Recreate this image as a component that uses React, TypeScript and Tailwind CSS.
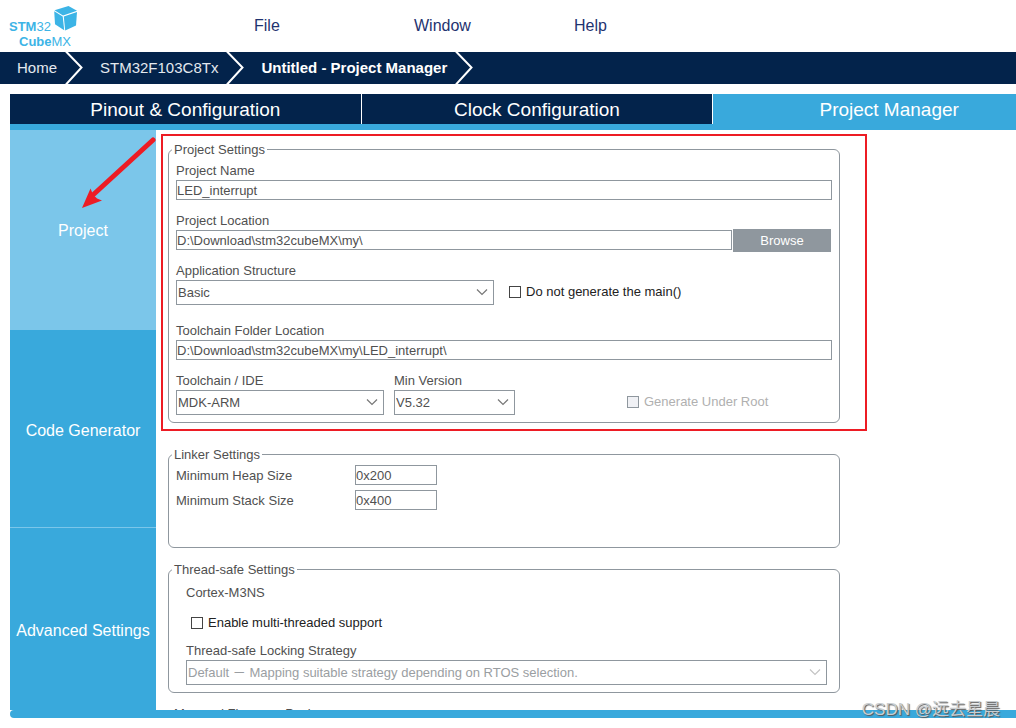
import { useState } from "react";
import type { ReactNode } from "react";

const MENU_ITEMS = ["File", "Window", "Help"];
const TABS = ["Pinout & Configuration", "Clock Configuration", "Project Manager"];

const inputStyle =
  "h-5 min-w-0 border border-[#8f979e] bg-white p-0 text-[13px] leading-4 text-[#505050] outline-none";

function Logo() {
  return (
    <svg
      width="80"
      height="52"
      viewBox="0 0 80 52"
      role="img"
      aria-label="STM32 CubeMX"
      className="font-['Liberation_Sans',sans-serif]"
      fill="#3cb4e6"
    >
      <path d="M54.5 10.3 68.5 6 77 10.8 63 15.6Z" />
      <path d="M54.2 11.3 62.7 16.4 64.2 30.2 55 24.2Z" />
      <path d="M63.8 16.4 77 11.9 76 25.6 65.2 30.4Z" />
      <text x="9" y="31" fontSize="13">
        <tspan fontWeight="700">STM</tspan>
        <tspan>32</tspan>
      </text>
      <text x="19" y="46" fontSize="13">
        <tspan fontWeight="700">Cube</tspan>
        <tspan>MX</tspan>
      </text>
    </svg>
  );
}

function CrumbArrow() {
  return (
    <svg width="18" height="32" viewBox="0 0 18 32" aria-hidden="true" className="mr-[17px] ml-2 shrink-0">
      <path d="M1 -0.5 16.5 15.5 1 32.5" fill="none" stroke="#fff" strokeWidth="2" />
    </svg>
  );
}

function Group({ title, className, children }: { title: string; className: string; children?: ReactNode }) {
  return (
    <fieldset className={`rounded-md border border-[#8f979e] px-[7px] ${className}`}>
      <legend className="-ml-1 px-0.5 leading-[17px]">{title}</legend>
      {children}
    </fieldset>
  );
}

function Field({ id, label, children, className = "" }: { id: string; label: string; children: ReactNode; className?: string }) {
  return (
    <div className={`flex flex-col ${className}`}>
      <label htmlFor={id} className="leading-[18px]">
        {label}
      </label>
      {children}
    </div>
  );
}

function Select({ id, value, disabled = false }: { id: string; value: string; disabled?: boolean }) {
  return (
    <div className="relative">
      <select
        id={id}
        disabled={disabled}
        className="block h-[25px] w-full appearance-none border border-[#8f979e] bg-white pl-px text-[13px] leading-4 text-[#505050] opacity-100 outline-none disabled:text-[#9a9ea2]"
      >
        <option>{value}</option>
      </select>
      <svg
        width="12"
        height="8"
        viewBox="0 0 12 8"
        aria-hidden="true"
        className={`pointer-events-none absolute top-2 right-1.5 ${disabled ? "text-[#c4c4c4]" : "text-[#777]"}`}
      >
        <path d="M1 1.5 6 6.5 11 1.5" fill="none" stroke="currentColor" strokeWidth="1.2" />
      </svg>
    </div>
  );
}

function Checkbox({ label, disabled = false, className = "" }: { label: string; disabled?: boolean; className?: string }) {
  return (
    <label className={`flex items-center gap-[5px] leading-4 ${disabled ? "text-[#b0b0b0]" : "text-[#222]"} ${className}`}>
      <input
        type="checkbox"
        disabled={disabled}
        className="size-3 shrink-0 appearance-none border border-[#444] bg-white checked:bg-[#39a9dc] disabled:border-[#8f979e] disabled:bg-[#f0f1f5]"
      />
      {label}
    </label>
  );
}

function ProjectSettings() {
  const [name, setName] = useState("LED_interrupt");
  const [location, setLocation] = useState("D:\\Download\\stm32cubeMX\\my\\");

  return (
    <div className="relative">
      <Group title="Project Settings" className="pt-1 pb-[7px]">
        <Field id="name" label="Project Name">
          <input id="name" value={name} onChange={(e) => setName(e.target.value)} className={inputStyle} />
        </Field>
        <Field id="location" label="Project Location" className="mt-3">
          <div className="flex h-5 items-center gap-px pr-px">
            <input
              id="location"
              value={location}
              onChange={(e) => setLocation(e.target.value)}
              className={`${inputStyle} flex-1`}
            />
            <button type="button" className="h-[23px] w-[98px] bg-[#8f979e] pt-px text-white">
              Browse
            </button>
          </div>
        </Field>
        <div className="mt-3 flex items-end gap-[15px]">
          <Field id="structure" label="Application Structure" className="w-[318px]">
            <Select id="structure" value="Basic" />
          </Field>
          <Checkbox label="Do not generate the main()" className="mb-px h-6" />
        </div>
        <Field id="folder" label="Toolchain Folder Location" className="mt-[17px]">
          <input id="folder" readOnly value={`${location}${name}\\`} className={inputStyle} />
        </Field>
        <div className="mt-3 flex items-end">
          <Field id="toolchain" label="Toolchain / IDE" className="w-[208px]">
            <Select id="toolchain" value="MDK-ARM" />
          </Field>
          <Field id="version" label="Min Version" className="ml-2.5 w-[121px]">
            <Select id="version" value="V5.32" />
          </Field>
          <Checkbox label="Generate Under Root" disabled className="mb-px ml-28 h-6" />
        </div>
      </Group>
      {/* highlight frame */}
      <div className="pointer-events-none absolute -top-[7px] -right-[27px] -bottom-2 -left-[7px] border-2 border-[#ed1c24]" />
    </div>
  );
}

export default function App() {
  return (
    <div className="relative flex h-screen flex-col overflow-hidden bg-white pb-2.5 font-['Liberation_Sans','Noto_Sans_CJK_SC',sans-serif] text-[13px] text-[#505050]">
      <header className="flex h-[52px] shrink-0 items-center">
        <div className="w-[254px]">
          <Logo />
        </div>
        <nav className="flex text-base text-[#1f3370]">
          {MENU_ITEMS.map((item) => (
            <button key={item} type="button" className="w-40 text-left">
              {item}
            </button>
          ))}
        </nav>
      </header>

      <nav className="flex h-8 shrink-0 items-center bg-[#03234b] pl-[17px] text-[15px] whitespace-nowrap text-white">
        <a href="#home" className="text-[#e4e9ef]">Home</a>
        <CrumbArrow />
        <a href="#device" className="text-[#e4e9ef]">STM32F103C8Tx</a>
        <CrumbArrow />
        <a href="#project" className="font-bold">Untitled - Project Manager</a>
        <CrumbArrow />
      </nav>

      {/* the frame runs past the right edge of the window */}
      <div className="mt-2.5 -mr-[49px] ml-2.5 flex min-h-0 flex-1 flex-col">
        <div className="grid shrink-0 grid-cols-3 border-b-[6px] border-[#39a9dc] text-[19px] text-white">
          {TABS.map((tab) => (
            <button
              key={tab}
              type="button"
              className={`h-[30px] border-white pt-0.5 leading-7 not-last:border-r ${tab === "Project Manager" ? "bg-[#39a9dc]" : "bg-[#03234b]"}`}
            >
              {tab}
            </button>
          ))}
        </div>

        <div className="flex min-h-0 flex-1 overflow-hidden">
          <aside className="relative flex w-[146px] shrink-0 flex-col overflow-hidden bg-[#39a9dc] text-base text-white">
            <button type="button" className="h-[200px] shrink-0 bg-[#7bc6ea] pt-0.5">
              Project
            </button>
            <button type="button" className="h-[198px] shrink-0 border-b border-[#7bc6ea] pt-1">
              Code Generator
            </button>
            <button type="button" className="h-[204px] shrink-0 pt-0.5 whitespace-nowrap">
              Advanced Settings
            </button>
            <svg width="78" height="76" viewBox="0 0 78 76" aria-hidden="true" className="pointer-events-none absolute top-1 right-0">
              <path d="M16 60 75 6" stroke="#ed1c24" strokeWidth="5" strokeLinecap="round" />
              <path d="M4 74 12.5 54.5 15 60.5 19 64.5 24 66.5Z" fill="#ed1c24" />
            </svg>
          </aside>

          <main className="w-full max-w-[684px] pt-[11px] pl-3">
            <ProjectSettings />
            <Group title="Linker Settings" className="mt-[23px] pt-0.5 pb-[35px]">
              <div className="grid grid-cols-[179px_82px] gap-y-[3px] leading-[22px]">
                <label htmlFor="heap">Minimum Heap Size</label>
                <input id="heap" defaultValue="0x200" className={inputStyle} />
                <label htmlFor="stack">Minimum Stack Size</label>
                <input id="stack" defaultValue="0x400" className={inputStyle} />
              </div>
            </Group>
            <Group title="Thread-safe Settings" className="mt-[13px] pt-1.5 pb-[7px]">
              <div className="pr-[5px] pl-2.5">
                <p className="leading-[18px]">Cortex-M3NS</p>
                <Checkbox label="Enable multi-threaded support" className="mt-[13px] mb-[11px] ml-[5px]" />
                <Field id="strategy" label="Thread-safe Locking Strategy">
                  <Select
                    id="strategy"
                    disabled
                    value="Default － Mapping suitable strategy depending on RTOS selection."
                  />
                </Field>
              </div>
            </Group>
            <Group title="Mcu and Firmware Package" className="mt-3 h-24" />
          </main>
        </div>

        <div className="h-2 shrink-0 rounded-l-full bg-[#39a9dc]" />
      </div>

      <span className="pointer-events-none absolute right-4 bottom-1.5 text-[17px] leading-6 text-[#c9cdd0] [text-shadow:1px_1px_1px_#555]">
        CSDN @远去星晨
      </span>
    </div>
  );
}
